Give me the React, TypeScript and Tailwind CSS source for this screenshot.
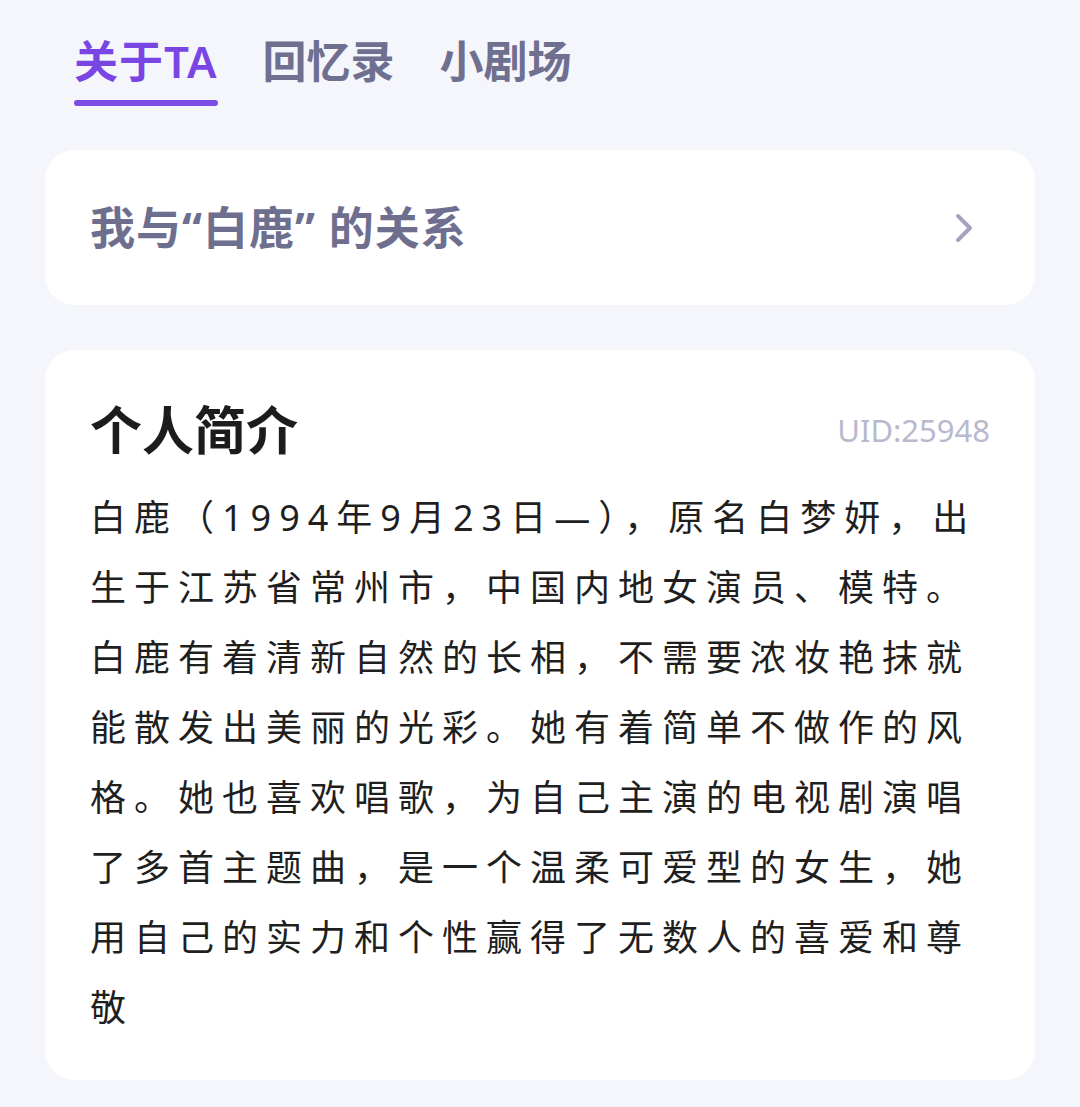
import React from 'react'

const tabs = [
  { label: '关于TA', active: true },
  { label: '回忆录', active: false },
  { label: '小剧场', active: false },
]

const intro = [
  '白鹿（1994年9月23日—），原名白梦妍，出',
  '生于江苏省常州市，中国内地女演员、模特。',
  '白鹿有着清新自然的长相，不需要浓妆艳抹就',
  '能散发出美丽的光彩。她有着简单不做作的风',
  '格。她也喜欢唱歌，为自己主演的电视剧演唱',
  '了多首主题曲，是一个温柔可爱型的女生，她',
  '用自己的实力和个性赢得了无数人的喜爱和尊',
  '敬',
]

const App = () => {
  return (
    <div className="min-h-[1107px] w-[1080px] bg-[#f5f6fc] px-[45px] pt-[36px] font-['Noto_Sans','Noto_Sans_CJK_SC',sans-serif]">
      {/* tabs */}
      <div className="flex gap-[45px] pl-[29px]">
        {tabs.map((t) => (
          <div key={t.label} className="flex flex-col">
            <span
              className={
                t.active
                  ? 'text-[44px] font-semibold leading-[50px] tracking-[1px] text-[#7a46e3]'
                  : 'text-[44px] font-semibold leading-[50px] text-[#6f7090]'
              }
            >
              {t.label}
            </span>
            <div className={t.active ? 'mt-[14px] h-[6px] rounded-full bg-[#7b4ce6]' : 'mt-[14px] h-[6px]'} />
          </div>
        ))}
      </div>

      {/* relation */}
      <div className="mt-[44px] flex h-[155px] items-center justify-between rounded-[30px] bg-white pl-[45px] pr-[62px]">
        <span className="text-[45px] font-bold tracking-[1px] text-[#6e6f8f]">我与“白鹿” 的关系</span>
        <svg width="18" height="30" viewBox="0 0 18 30" fill="none">
          <path d="M3 3l12 12-12 12" stroke="#a4a4c0" strokeWidth={4} strokeLinecap="round" strokeLinejoin="round" />
        </svg>
      </div>

      {/* intro */}
      <div className="mt-[45px] rounded-[30px] bg-white px-[45px] pb-[37px] pt-[50px]">
        <div className="flex items-center justify-between">
          <h2 className="text-[52px] font-bold leading-[60px] text-[#1c1c1e]">个人简介</h2>
          <span className="text-[31px] leading-[60px] text-[#b8b9cd]">UID:25948</span>
        </div>
        <div className="mt-[23px] text-[36px] leading-[70px] tracking-[8px] text-[#1f1f1f]">
          {intro.map((line, i) => (
            <div key={i} className="whitespace-nowrap">{line}</div>
          ))}
        </div>
      </div>
    </div>
  )
}

export default App
